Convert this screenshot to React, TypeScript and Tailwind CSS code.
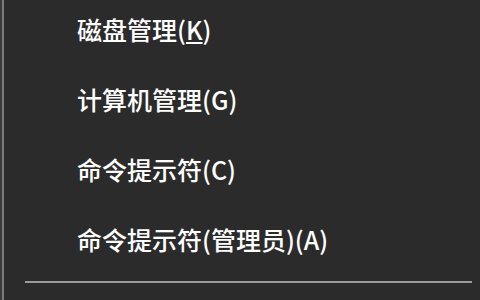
import React from "react";

const items: { label: string; key: string; underline?: boolean }[] = [
  { label: "磁盘管理", key: "K", underline: true },
  { label: "计算机管理", key: "G" },
  { label: "命令提示符", key: "C" },
  { label: "命令提示符(管理员)", key: "A" },
];

export default function App() {
  return (
    <div
      className="w-[480px] h-[300px] overflow-hidden bg-[#2b2b2b] flex"
      style={{ fontFamily: '"Noto Sans CJK SC", "Noto Sans", sans-serif' }}
    >
      <div className="w-[2px] h-full bg-[#3a3a3a]" />
      <div className="w-[2px] h-full bg-[#7a7a7a]" />
      <div className="flex-1 flex flex-col mt-[-6px]">
        {items.map((it) => (
          <div key={it.key} className="h-[70px] flex items-center pl-[73px] text-white text-[25px] font-medium leading-none">
            <span>
              {it.label}(
              <span className={it.underline ? "underline underline-offset-2" : ""}>{it.key}</span>)
            </span>
          </div>
        ))}
        <div className="mt-[7px] ml-[21px] mr-[8px] h-[2px] bg-[#9a9a9a]" />
      </div>
    </div>
  );
}
